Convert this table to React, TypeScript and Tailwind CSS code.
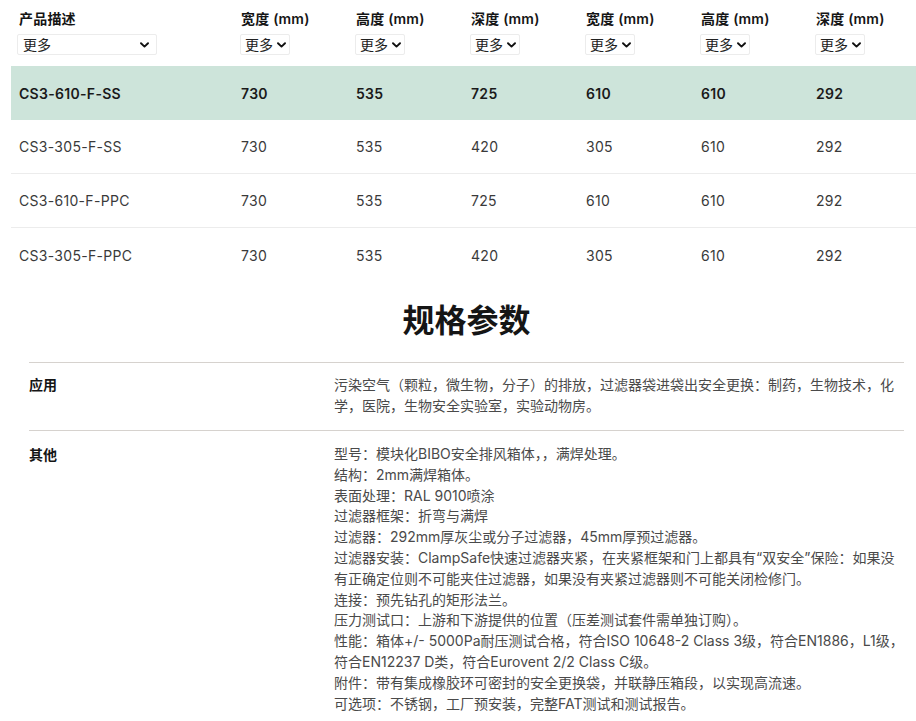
import React from "react";

const font = { fontFamily: '"Inter", "Noto Sans CJK SC", sans-serif' };

function Chevron() {
  return (
    <svg width="9" height="6" viewBox="0 0 9 6" className="shrink-0">
      <path d="M1 1.2 L4.5 4.6 L8 1.2" fill="none" stroke="#111" strokeWidth="1.9" strokeLinecap="round" strokeLinejoin="round" />
    </svg>
  );
}

function Select({ wide }: { wide?: boolean }) {
  return (
    <div
      className={
        "flex h-[21px] items-center rounded-[2px] border border-[#ececec] bg-white text-[14px] leading-none text-[#222] " +
        (wide ? "-ml-[2px] w-[140px] justify-between pl-[5px] pr-[7px]" : "-ml-px w-[50px] gap-[4px] pl-[4px]")
      }
    >
      <span>更多</span>
      <Chevron />
    </div>
  );
}

const headers = ["产品描述", "宽度 (mm)", "高度 (mm)", "深度 (mm)", "宽度 (mm)", "高度 (mm)", "深度 (mm)"];
const rows = [
  ["CS3-610-F-SS", "730", "535", "725", "610", "610", "292"],
  ["CS3-305-F-SS", "730", "535", "420", "305", "610", "292"],
  ["CS3-610-F-PPC", "730", "535", "725", "610", "610", "292"],
  ["CS3-305-F-PPC", "730", "535", "420", "305", "610", "292"],
];

const gridCols = "grid grid-cols-[222px_115px_115px_115px_115px_115px_115px]";

const other = [
  "型号：模块化BIBO安全排风箱体，，满焊处理。",
  "结构：2mm满焊箱体。",
  "表面处理：RAL 9010喷涂",
  "过滤器框架：折弯与满焊",
  "过滤器：292mm厚灰尘或分子过滤器，45mm厚预过滤器。",
  "过滤器安装：ClampSafe快速过滤器夹紧，在夹紧框架和门上都具有“双安全”保险：如果没有正确定位则不可能夹住过滤器，如果没有夹紧过滤器则不可能关闭检修门。",
  "连接：预先钻孔的矩形法兰。",
  "压力测试口：上游和下游提供的位置（压差测试套件需单独订购）。",
  "性能：箱体+/- 5000Pa耐压测试合格，符合ISO 10648-2 Class 3级，符合EN1886，L1级，符合EN12237 D类，符合Eurovent 2/2 Class C级。",
  "附件：带有集成橡胶环可密封的安全更换袋，并联静压箱段，以实现高流速。",
  "可选项：不锈钢，工厂预安装，完整FAT测试和测试报告。",
];

export default function App() {
  return (
    <div className="h-[721px] w-[916px] overflow-hidden bg-white" style={font}>
      <div className="ml-[11px] w-[912px]">
        <div className={gridCols + " h-[66px]"}>
          {headers.map((h, i) => (
            <div key={i} className="px-2 pt-[9px]">
              <div className="text-[14px] font-semibold leading-5 tracking-[0.2px] text-[#151515]">{h}</div>
              <div className="mt-[5px]">
                <Select wide={i === 0} />
              </div>
            </div>
          ))}
        </div>
        {rows.map((r, ri) => (
          <div
            key={ri}
            className={
              gridCols +
              " h-[54px] items-center text-[14px] tracking-[0.3px] " +
              (ri === 0 ? "bg-[#cde4da] font-semibold text-[#1a1a1a]" : "text-[#3a3a3a]") +
              (ri === 1 || ri === 2 ? " border-b border-[#ececec]" : "")
            }
          >
            {r.map((c, ci) => (
              <div key={ci} className="px-2">
                {c}
              </div>
            ))}
          </div>
        ))}
      </div>

      <div className="mx-[29px] w-[875px]">
        <h2 className="mt-[19px] text-center text-[32px] font-bold leading-10 text-[#151515]">规格参数</h2>
        <div className="mt-[21px] border-t border-[#d6d2ce]">
          <div className="grid grid-cols-[305px_570px] border-b border-[#d6d2ce] pb-[14px] pt-[11px]">
            <div className="text-[14px] font-bold leading-[21px] text-[#151515]">应用</div>
            <div className="text-[14px] leading-[21px] text-[#4a4a4a]">
              污染空气（颗粒，微生物，分子）的排放，过滤器袋进袋出安全更换：制药，生物技术，化学，医院，生物安全实验室，实验动物房。
            </div>
          </div>
          <div className="grid grid-cols-[305px_570px] pt-[13px]">
            <div className="text-[14px] font-bold leading-[21px] text-[#151515]">其他</div>
            <div className="text-[14px] leading-[20.8px] text-[#4a4a4a]">
              {other.map((l, i) => (
                <p key={i}>{l}</p>
              ))}
            </div>
          </div>
        </div>
      </div>
    </div>
  );
}
